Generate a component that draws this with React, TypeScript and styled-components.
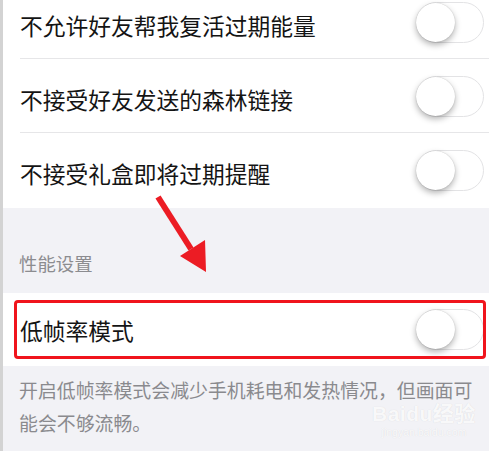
import React from "react";
import styled, { createGlobalStyle } from "styled-components";

const Global = createGlobalStyle`
  html, body { margin: 0; padding: 0; background: #ffffff; overflow: hidden; }
  body { font-family: "Noto Sans CJK SC", "Noto Sans", sans-serif; }
`;

const Screen = styled.div`
  position: relative;
  width: 489px;
  height: 451px;
  overflow: hidden;
  box-sizing: border-box;
  border-left: 3px solid #d3d3d3;
  background: #f2f2f6;
`;

const List = styled.div`
  margin-top: -15px;
  display: flex;
  flex-direction: column;
`;

const Row = styled.div<{ $divider?: boolean; $h: number }>`
  position: relative;
  height: ${(p) => p.$h}px;
  background: #ffffff;
  display: flex;
  align-items: center;
  justify-content: space-between;
  padding: 0 5px 0 17px;
  box-sizing: border-box;
  &::after {
    content: "";
    display: ${(p) => (p.$divider ? "block" : "none")};
    position: absolute;
    left: 17px;
    right: 0;
    bottom: 0;
    height: 1px;
    background: #e6e6e8;
  }
`;

const Label = styled.span<{ $shift?: number }>`
  font-size: 22.75px;
  color: #141414;
  line-height: 1;
  transform: translateY(${(p) => p.$shift ?? 4}px);
  white-space: nowrap;
`;

const Track = styled.div`
  width: 68px;
  height: 41px;
  box-sizing: border-box;
  border: 1.5px solid #e3e3e5;
  border-radius: 21px;
  background: #ffffff;
  display: flex;
  align-items: center;
`;

const Knob = styled.div`
  width: 39px;
  height: 39px;
  margin-left: -1px;
  border-radius: 50%;
  background: #ffffff;
  box-shadow: 0 3px 6px rgba(0, 0, 0, 0.3), 0 0 1px rgba(0, 0, 0, 0.25);
`;

const SectionHeader = styled.div`
  height: 85px;
  display: flex;
  align-items: flex-end;
  padding: 0 0 21px 16px;
  box-sizing: border-box;
  font-size: 18.4px;
  line-height: 1;
  color: #8c8c90;
`;

const Footer = styled.div`
  padding: 7px 12px 0 16px;
  font-size: 18.9px;
  line-height: 33px;
  color: #8a8a8e;
`;

const Highlight = styled.div`
  position: absolute;
  left: 11px;
  right: 3px;
  top: 7px;
  bottom: 7px;
  border: 3px solid #f0141c;
  border-radius: 4px;
  pointer-events: none;
`;

const Arrow = styled.svg`
  position: absolute;
  left: 147px;
  top: 190px;
`;

const Watermark = styled.div`
  position: absolute;
  left: 369px;
  top: 404px;
  display: flex;
  flex-direction: column;
  align-items: center;
  color: rgba(255, 255, 255, 0.85);
  text-shadow: 0 0 1px rgba(0, 0, 0, 0.12);
  font-family: "Liberation Sans", "Noto Sans CJK SC", sans-serif;
`;

const WmMain = styled.div`
  font-size: 21px;
  font-weight: bold;
  line-height: 20px;
  letter-spacing: 0.5px;
`;

const WmSub = styled.div`
  font-size: 10.5px;
  line-height: 12px;
  margin-top: 2px;
`;

const Toggle = () => (
  <Track>
    <Knob />
  </Track>
);

export default function App() {
  return (
    <>
      <Global />
      <Screen>
        <List>
          <Row $h={74} $divider>
            <Label>不允许好友帮我复活过期能量</Label>
            <Toggle />
          </Row>
          <Row $h={74} $divider>
            <Label>不接受好友发送的森林链接</Label>
            <Toggle />
          </Row>
          <Row $h={75}>
            <Label>不接受礼盒即将过期提醒</Label>
            <Toggle />
          </Row>
          <SectionHeader>性能设置</SectionHeader>
          <Row $h={73}>
            <Label $shift={2}>低帧率模式</Label>
            <Toggle />
            <Highlight />
          </Row>
          <Footer>开启低帧率模式会减少手机耗电和发热情况，但画面可能会不够流畅。</Footer>
        </List>
        <Arrow width="62" height="90" viewBox="0 0 62 90">
          <line x1="8" y1="7" x2="41" y2="59" stroke="#ec1c24" strokeWidth="6" />
          <polygon points="30,66 55,50 56,82" fill="#ec1c24" />
        </Arrow>
        <Watermark>
          <WmMain>Baidu经验</WmMain>
          <WmSub>jingyan.baidu.com</WmSub>
        </Watermark>
      </Screen>
    </>
  );
}
